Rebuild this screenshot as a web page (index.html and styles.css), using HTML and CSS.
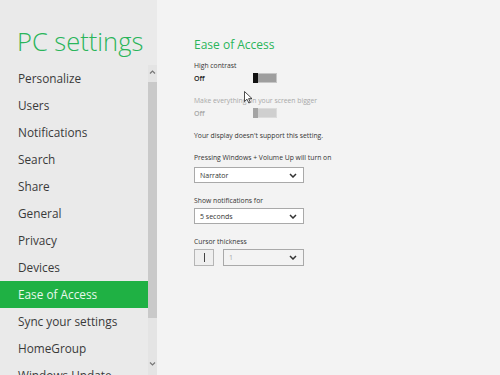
FILE: index.html
```html
<!DOCTYPE html>
<html lang="en">
<head>
    <meta charset="UTF-8">
    <title>PC settings</title>
    <link rel="stylesheet" href="styles.css">
</head>
<body>
    <div class="screen">
        <aside class="sidebar">
            <h1 class="title">PC settings</h1>
            <div class="nav-wrap">
                <ul class="nav">
                    <li>Personalize</li>
                    <li>Users</li>
                    <li>Notifications</li>
                    <li>Search</li>
                    <li>Share</li>
                    <li>General</li>
                    <li>Privacy</li>
                    <li>Devices</li>
                    <li class="active">Ease of Access</li>
                    <li>Sync your settings</li>
                    <li>HomeGroup</li>
                    <li>Windows Update</li>
                </ul>
                <div class="scrollbar">
                    <svg class="arrow" width="9" height="6" viewBox="0 0 9 6"><path d="M2 4.5 L4.5 2 L7 4.5" fill="none" stroke="#777" stroke-width="1.2"/></svg>
                    <div class="thumb"></div>
                    <svg class="arrow arrow-down" width="9" height="6" viewBox="0 0 9 6"><path d="M2 1.5 L4.5 4 L7 1.5" fill="none" stroke="#777" stroke-width="1.2"/></svg>
                </div>
            </div>
        </aside>

        <main class="content">
            <h2 class="heading">Ease of Access</h2>

            <div class="label label-first">High contrast</div>
            <div class="toggle-row">
                <span class="toggle-text">Off</span>
                <span class="toggle"><span class="knob"></span></span>
            </div>

            <div class="label disabled label-gap">Make everything on your screen bigger</div>
            <div class="toggle-row disabled">
                <span class="toggle-text">Off</span>
                <span class="toggle"><span class="knob"></span></span>
            </div>

            <div class="label label-gap">Your display doesn't support this setting.</div>

            <div class="label label-gap">Pressing Windows + Volume Up will turn on</div>
            <div class="select select-top">
                <span>Narrator</span>
                <svg width="8" height="5" viewBox="0 0 8 5"><path d="M1 1 L4 4 L7 1" fill="none" stroke="#333" stroke-width="1.5"/></svg>
            </div>

            <div class="label label-section">Show notifications for</div>
            <div class="select">
                <span>5 seconds</span>
                <svg width="8" height="5" viewBox="0 0 8 5"><path d="M1 1 L4 4 L7 1" fill="none" stroke="#333" stroke-width="1.5"/></svg>
            </div>

            <div class="label label-section">Cursor thickness</div>
            <div class="cursor-row">
                <div class="cursor-preview"><span class="caret"></span></div>
                <div class="select select-small">
                    <span class="muted">1</span>
                    <svg width="8" height="5" viewBox="0 0 8 5"><path d="M1 1 L4 4 L7 1" fill="none" stroke="#333" stroke-width="1.5"/></svg>
                </div>
            </div>

            <svg class="pointer" width="9" height="13" viewBox="0 0 9 13">
                <path d="M0.5 0.5 L0.5 10.5 L3 8.2 L4.8 12 L6.3 11.3 L4.6 7.6 L8 7.6 Z" fill="#fff" stroke="#222" stroke-width="0.8"/>
            </svg>
        </main>
    </div>
</body>
</html>
```

FILE: styles.css
```css
* {
    box-sizing: border-box;
}

body {
    margin: 0;
    font-family: "Open Sans", "Noto Sans", sans-serif;
    color: #333;
    background: #f3f3f3;
}

.screen {
    display: flex;
    width: 500px;
    height: 375px;
    overflow: hidden;
}

/* left column */
.sidebar {
    width: 157px;
    flex-shrink: 0;
    background: #eaeaea;
    display: flex;
    flex-direction: column;
}

.title {
    flex-shrink: 0;
    margin: 0;
    height: 65px;
    padding: 26px 0 0 17px;
    font-size: 25.5px;
    font-weight: 300;
    line-height: 30px;
    color: #2ab55a;
    white-space: nowrap;
}

.nav-wrap {
    display: flex;
    flex: 1;
    min-height: 0;
}

.nav {
    list-style: none;
    margin: 0;
    padding: 0;
    width: 148px;
}

.nav li {
    height: 27px;
    line-height: 27px;
    padding-left: 18px;
    font-size: 11.8px;
    color: #3a3a3a;
    white-space: nowrap;
}

.nav li.active {
    background: #1fb144;
    color: #e8f8ec;
}

.scrollbar {
    width: 9px;
    background: #e4e4e4;
    display: flex;
    flex-direction: column;
    align-items: center;
}

.arrow {
    margin-top: 4px;
    flex-shrink: 0;
}

.thumb {
    flex-shrink: 0;
    width: 9px;
    height: 236px;
    margin-top: 7px;
    background: #c9c9c9;
}

.arrow-down {
    margin-top: 43px;
}

/* right column */
.content {
    position: relative;
    flex: 1;
    padding-left: 37px;
}

.heading {
    margin: 37px 0 0;
    font-size: 12px;
    font-weight: 400;
    line-height: 16px;
    color: #2ab55a;
}

.label {
    height: 10px;
    font-size: 6.8px;
    line-height: 10px;
    color: #333;
    white-space: nowrap;
}

.label-first {
    margin-top: 8px;
}

.label-gap {
    margin-top: 12px;
}

.label-section {
    margin-top: 13px;
}

.disabled,
.disabled .toggle-text {
    color: #a8a8a8;
}

.toggle-row {
    display: flex;
    align-items: center;
    height: 12px;
    margin-top: 1px;
}

.toggle-text {
    width: 59px;
    font-size: 7px;
    font-weight: 600;
    color: #222;
}

.toggle {
    display: flex;
    width: 24px;
    height: 10px;
    border: 1px solid #c6c6c6;
    background: #9e9e9e;
}

.knob {
    width: 5px;
    margin: -1px 0 -1px -1px;
    background: #111;
}

.disabled .toggle {
    background: #cfcfcf;
    border-color: #dcdcdc;
}

.disabled .knob {
    background: #a4a4a4;
}

.select {
    display: flex;
    align-items: center;
    justify-content: space-between;
    width: 110px;
    height: 16px;
    margin-top: 2px;
    padding: 0 6px 0 5px;
    border: 1px solid #a9a9a9;
    background: #fff;
    font-size: 7px;
    color: #333;
}

.select-top {
    margin-top: 4px;
}

.muted {
    color: #aaa;
}

.cursor-row {
    display: flex;
    gap: 9px;
    margin-top: 2px;
}

.cursor-preview {
    display: flex;
    align-items: center;
    justify-content: center;
    width: 20px;
    height: 17px;
    border: 1px solid #b5b5b5;
    background: #efefef;
}

.caret {
    width: 1px;
    height: 9px;
    background: #444;
}

.select-small {
    width: 81px;
    height: 17px;
    margin-top: 0;
    background: #f3f3f3;
}

.pointer {
    position: absolute;
    left: 87px;
    top: 91px;
}
```
